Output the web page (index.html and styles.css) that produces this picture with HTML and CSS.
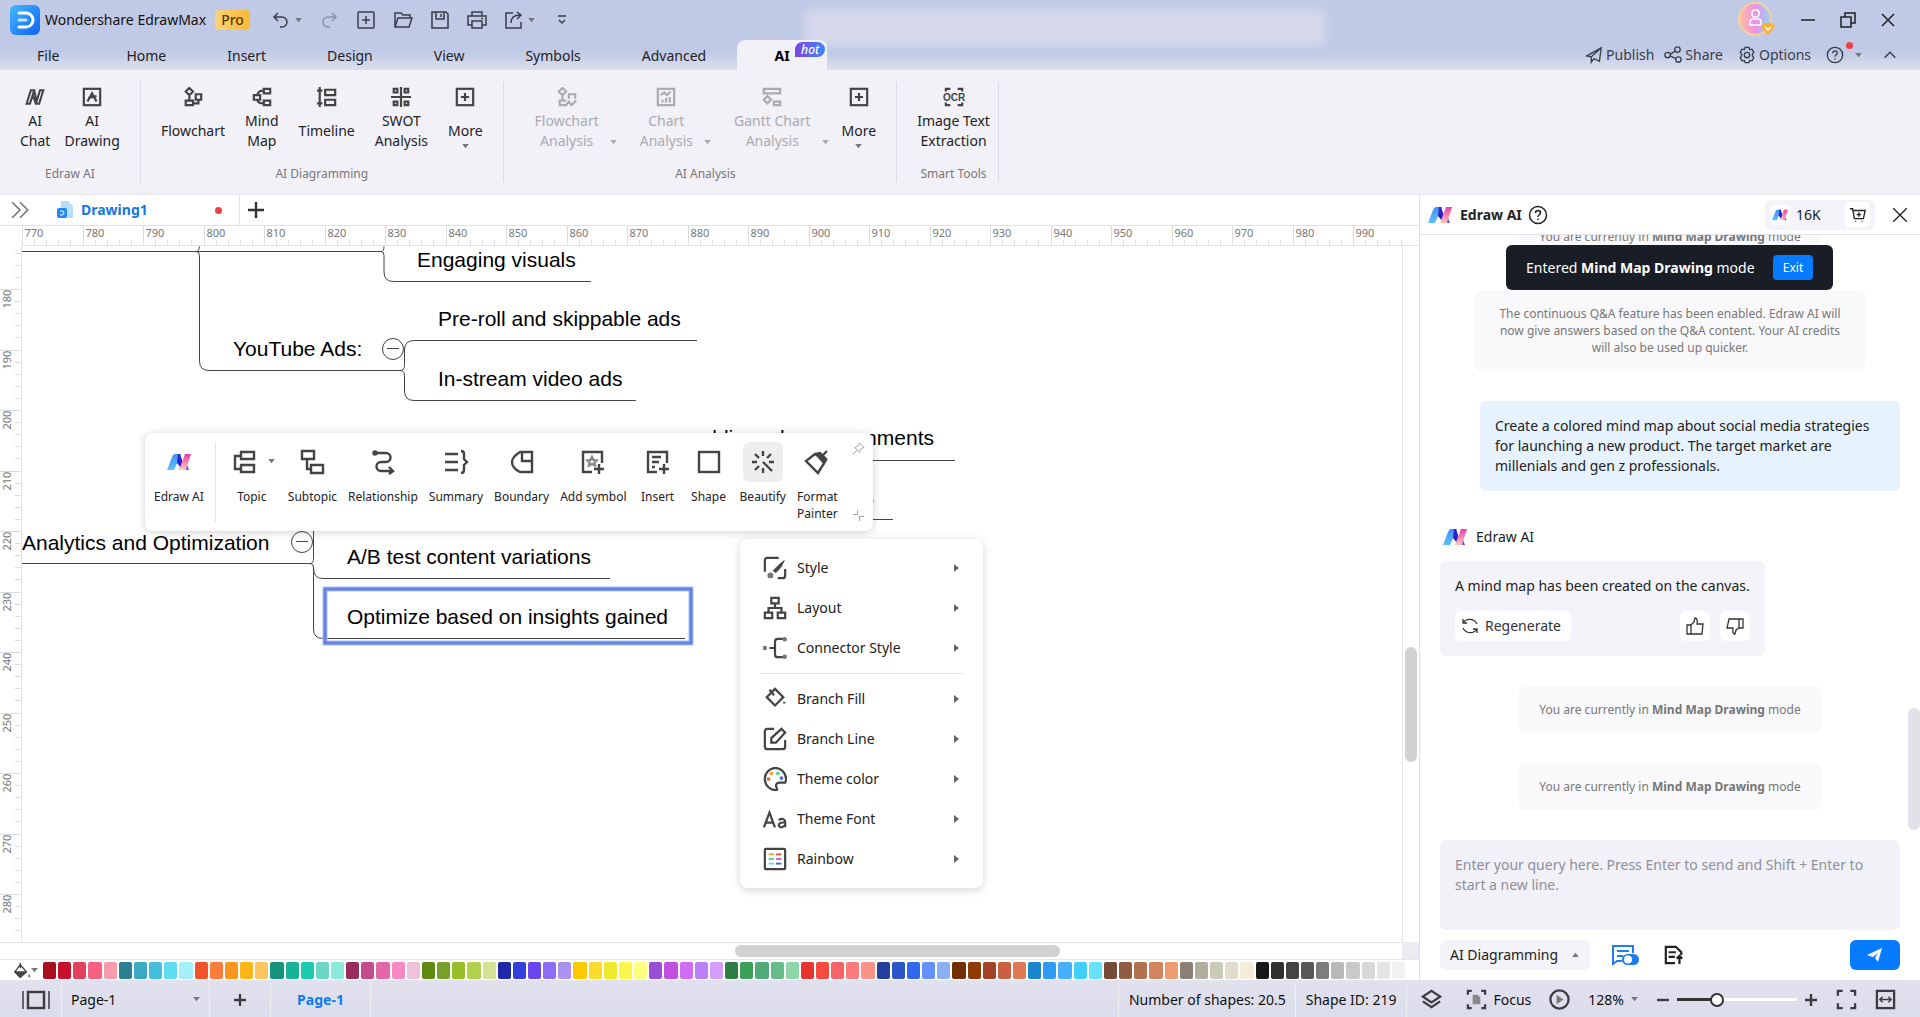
FILE: index.html
```
<!DOCTYPE html>
<html lang="en">
<head>
<meta charset="UTF-8">
<meta name="viewport" content="width=device-width, initial-scale=1.0">
<title>Wondershare EdrawMax</title>
<link rel="stylesheet" href="styles.css">
</head>
<body>

<!-- shared icons -->
<svg class="defs" aria-hidden="true">
  <defs>
    <linearGradient id="g-blue" x1="0" y1="0" x2="0" y2="1"><stop offset="0" stop-color="#3f8ef5"/><stop offset="1" stop-color="#62c0fb"/></linearGradient>
    <linearGradient id="g-pink" x1="0" y1="0" x2="0" y2="1"><stop offset="0" stop-color="#e83fae"/><stop offset="1" stop-color="#fbc9b4"/></linearGradient>
    <linearGradient id="g-logo" x1="0" y1="0" x2="1" y2="1"><stop offset="0" stop-color="#45b8ff"/><stop offset="1" stop-color="#0c63f4"/></linearGradient>
    <linearGradient id="g-user" x1="0" y1="0" x2="1" y2="0"><stop offset="0" stop-color="#ffc39a"/><stop offset="0.5" stop-color="#f08fe6"/><stop offset="1" stop-color="#8fd8f5"/></linearGradient>
    <symbol id="i-edraw" viewBox="0 0 24 18">
      <path d="M8 1h6L7 17H0L5 4Q6 1 8 1z" fill="url(#g-blue)"/>
      <path d="M11 1h2l3 9-2 5-4-5z" fill="#2b22c9"/>
      <path d="M18 1h6l-5 16h-7z" fill="url(#g-pink)"/>
      <path d="M20 12l2 5h-3z" fill="#6a55d8"/>
    </symbol>
    <symbol id="i-caret" viewBox="0 0 8 6"><path d="M0 0h8L4 5z" fill="currentColor"/></symbol>
    <symbol id="i-help" viewBox="0 0 20 20"><circle cx="10" cy="10" r="8.500"/><path d="M7.500 8c0-3.400 5-3.400 5 0 0 1.800-2.500 1.800-2.500 4M10 13.500v1.500"/></symbol>
    <symbol id="i-more" viewBox="0 0 22 22"><rect x="2" y="2" width="18" height="18"/><path d="M11 6.500v9M6.500 11h9"/></symbol>
    <symbol id="i-close" viewBox="0 0 16 16"><path d="M2 2l12 12M14 2L2 14"/></symbol>
  </defs>
</svg>

<header class="titlebar">
  <div class="title-row">
    <svg class="app-logo" viewBox="0 0 30 30"><rect width="30" height="30" rx="6" fill="url(#g-logo)"/><path d="M9 8h7a7 7 0 0 1 0 14H9" fill="none" stroke="#fff" stroke-width="3" stroke-linecap="round"/><path d="M9 15h7" stroke="#c4e4ff" stroke-width="3" stroke-linecap="round"/></svg>
    <span class="app-name">Wondershare EdrawMax</span>
    <span class="pro">Pro</span>
    <div class="quick">
      <button aria-label="Undo"><svg class="ic" viewBox="0 0 20 20"><path d="M7 3L3 7l4 4M3 7h8a5 5 0 0 1 0 10H9"/></svg><svg class="caret"><use href="#i-caret"/></svg></button>
      <button class="faded" aria-label="Redo"><svg class="ic" viewBox="0 0 20 20"><path d="M13 3l4 4-4 4M17 7H9a5 5 0 0 0 0 10h2"/></svg></button>
      <button aria-label="New"><svg class="ic" viewBox="0 0 20 20"><rect x="2" y="2" width="16" height="16" rx="1"/><path d="M10 6v8M6 10h8"/></svg></button>
      <button aria-label="Open"><svg class="ic" viewBox="0 0 20 20"><path d="M2 17V3h6l2 2h7v3M2 17L5 8h14l-3 9z"/></svg></button>
      <button aria-label="Save"><svg class="ic" viewBox="0 0 20 20"><path d="M2 2h14l2 2v14H2zM6 2v7h8V2M11 4v3"/></svg></button>
      <button aria-label="Print"><svg class="ic" viewBox="0 0 20 20"><path d="M5 6V2h10v4M5 15H1V6h18v9h-4M5 11h10v7H5zM14 8.500h2"/></svg></button>
      <button aria-label="Export"><svg class="ic" viewBox="0 0 20 20"><path d="M9 3H2v15h15v-6M7 13c0-5 3-8 9-8M13 2l4 3-4 4"/></svg><svg class="caret"><use href="#i-caret"/></svg></button>
      <button aria-label="Customize"><svg class="ic" viewBox="0 0 20 20"><path d="M6 6h8M7 10l3 3 3-3"/></svg></button>
    </div>
    <div class="window-buttons">
      <svg class="avatar" viewBox="0 0 38 36"><circle cx="17" cy="17" r="16" fill="url(#g-user)" stroke="#f5d29a" stroke-width="2"/><g fill="none" stroke="#fff" stroke-width="1.500"><rect x="14" y="8" width="7" height="7" rx="3"/><path d="M12 23v-3q0-3 3-3h5q3 0 3 3v3z"/></g><path d="M26 21h8l3 4-7 8-7-8z" fill="#f9b233"/><path d="M27 25l3 3 3-3" fill="none" stroke="#fff" stroke-width="1.500"/></svg>
      <button aria-label="Minimize"><svg class="ic dark" viewBox="0 0 16 16"><path d="M1 8h14"/></svg></button>
      <button aria-label="Restore"><svg class="ic dark" viewBox="0 0 16 16"><path d="M1 5h10v10H1zM5 5V1h10v10h-4"/></svg></button>
      <button aria-label="Close"><svg class="ic dark"><use href="#i-close"/></svg></button>
    </div>
  </div>
  <div class="menu-row">
    <nav class="menu">
      <button>File</button>
      <button>Home</button>
      <button>Insert</button>
      <button>Design</button>
      <button>View</button>
      <button>Symbols</button>
      <button>Advanced</button>
      <button class="active">AI<span class="hot">hot</span></button>
    </nav>
    <div class="menu-right">
      <button><svg class="ic" viewBox="0 0 20 20"><path d="M2 11L18 2l-2 15-6-3-3 4v-6zM7 12l11-10"/></svg>Publish</button>
      <button><svg class="ic" viewBox="0 0 20 20"><circle cx="4" cy="10" r="3"/><circle cx="15" cy="4" r="3"/><circle cx="16" cy="15" r="3"/><path d="M7 9l5-3M7 11l6 3"/></svg>Share</button>
      <button class="options"><svg class="ic" viewBox="0 0 20 20"><path d="M8 1.500h4l1 2.500 2.500-.5 2 3.500L16 9.200v1.600l1.500 2.200-2 3.500L13 16l-1 2.500H8L7 16l-2.500.5-2-3.500L4 10.800V9.200L2.500 7l2-3.500L7 4z"/><circle cx="10" cy="10" r="3"/></svg>Options</button>
      <button class="help" aria-label="Help"><svg class="ic"><use href="#i-help"/></svg><svg class="caret"><use href="#i-caret"/></svg><i class="dot"></i></button>
      <button aria-label="Collapse ribbon"><svg class="ic" viewBox="0 0 20 20"><path d="M4 13l6-6 6 6"/></svg></button>
    </div>
  </div>
</header>

<section class="ribbon">
  <div class="group first">
    <div class="tools">
      <button class="tool"><svg class="ic bold" viewBox="0 0 24 20"><path d="M2 18L7 2h4L6 18zM11 2l3 13 4-13h4l-5 16h-4L9.500 8"/></svg><span>AI<br>Chat</span></button>
      <button class="tool"><svg class="ic bold" viewBox="0 0 22 22"><rect x="2" y="2" width="18" height="18"/><path d="M6 16l5-9 5 9M7 12l9-2"/></svg><span>AI<br>Drawing</span></button>
    </div>
    <p>Edraw AI</p>
  </div>
  <div class="group">
    <div class="tools">
      <button class="tool"><svg class="ic bold" viewBox="0 0 22 22"><path d="M7 1l4 4-4 4-4-4zM7 9v6M3 15h8v5H3zM14 8h6v6h-6zM11 18h6v-4"/></svg><span>Flowchart</span></button>
      <button class="tool"><svg class="ic bold" viewBox="0 0 22 22"><path d="M13 2h7v5h-7zM13 15h7v5h-7zM2 9h7v5H2zM6 9q0-5 7-5M6 14q0 4 7 4"/></svg><span>Mind<br>Map</span></button>
      <button class="tool"><svg class="ic bold" viewBox="0 0 22 22"><path d="M3 0v22M0 4h6M0 18h6M9 3h11v6H9zM9 14h11v6H9z"/></svg><span>Timeline</span></button>
      <button class="tool"><svg class="ic bold" viewBox="0 0 22 22"><path d="M11 0v22M0 11h22M3 2h4v4H3zM15 2h4v4h-4zM3 16h4v4H3zM15 16h4v4h-4z"/></svg><span>SWOT<br>Analysis</span></button>
      <button class="tool"><svg class="ic bold"><use href="#i-more"/></svg><span>More</span><svg class="caret under"><use href="#i-caret"/></svg></button>
    </div>
    <p>AI Diagramming</p>
  </div>
  <div class="group analysis">
    <div class="tools">
      <button class="tool" disabled><svg class="ic bold" viewBox="0 0 22 22"><path d="M6 1l4 4-4 4-4-4zM6 9v6M11 20H3v-5h7M13 13V8h7v5M10 20l3-4 3 4 5-5"/></svg><span>Flowchart<br>Analysis</span><svg class="caret side"><use href="#i-caret"/></svg></button>
      <button class="tool" disabled><svg class="ic bold" viewBox="0 0 22 22"><rect x="2" y="2" width="18" height="18"/><path d="M5 9l4-3 3 3 4-4M7 17v-3M11 17v-5M15 17v-6"/></svg><span>Chart<br>Analysis</span><svg class="caret side"><use href="#i-caret"/></svg></button>
      <button class="tool" disabled><svg class="ic bold" viewBox="0 0 22 22"><path d="M2 7V2h18v5zM6 10l4 4-4 4-4-4zM13 16h7v4h-7z"/></svg><span>Gantt Chart<br>Analysis</span><svg class="caret side"><use href="#i-caret"/></svg></button>
      <button class="tool"><svg class="ic bold"><use href="#i-more"/></svg><span>More</span><svg class="caret under"><use href="#i-caret"/></svg></button>
    </div>
    <p>AI Analysis</p>
  </div>
  <div class="group smart">
    <div class="tools">
      <button class="tool"><svg class="ic bold" viewBox="0 0 22 22"><path d="M2 5V2h5M15 2h5v3M2 17v3h5M15 20h5v-3"/><text x="11" y="15" text-anchor="middle" class="ocr">OCR</text></svg><span>Image Text<br>Extraction</span></button>
    </div>
    <p>Smart Tools</p>
  </div>
</section>

<main class="workspace">
  <section class="editor">
    <div class="doc-tabs">
      <button class="expand" aria-label="Expand"><svg class="ic" viewBox="0 0 18 18"><path d="M2 2l7 7-7 7M9 2l7 7-7 7"/></svg></button>
      <div class="doc-tab">
        <svg class="doc-icon" viewBox="0 0 16 18"><path d="M4 0h7l5 5v12H4z" fill="#b9dcfb"/><rect y="7" width="10" height="10" rx="2" fill="#2388f2"/><path d="M3 10h2a2 2 0 0 1 0 4H3" fill="none" stroke="#fff"/></svg>
        <span>Drawing1</span>
        <i class="dot"></i>
      </div>
      <button class="add-tab" aria-label="New tab"><svg class="ic thick" viewBox="0 0 20 20"><path d="M10 2v16M2 10h16"/></svg></button>
    </div>
    <div class="board">
      <div class="ruler-corner"></div>
      <svg class="ruler-top" id="ruler-top"></svg>
      <svg class="ruler-left" id="ruler-left"></svg>
      <div class="canvas">
        <svg class="mindmap">
          <g transform="translate(-22 -246)">
            <g class="links">
              <path d="M0 251.500H381q3 0 3 -5M196 251.500q3 0 3.500 -5M196 251.500q3.500 0 3.500 4V361q0 9.500 9.500 9.500H400"/>
              <path d="M381 251.500q3 0 3 4V272q0 9.500 9.500 9.500H591"/>
              <path d="M400 370.500q4.500 0 4.500 -5V350q0 -9.500 9.500 -9.500H697"/>
              <path d="M400 370.500q4.500 0 4.500 5V391q0 9.500 9.500 9.500H636"/>
              <path d="M690 460.500H955M690 519.500H893"/>
              <path d="M0 563.500H310q3.500 0 3.500 -5V500"/>
              <path d="M310 563.500q3.500 0 3.500 4 0 11 9 11H610M313.500 566V629q0 9.500 9.500 9.500H685"/>
            </g>
            <g class="folds">
              <circle cx="393" cy="349" r="10.500"/><path d="M387 348.500h12"/>
              <circle cx="302" cy="542" r="10.500"/><path d="M296 541.500h12"/>
            </g>
            <rect x="325" y="589" width="366" height="54" class="selection-glow"/>
            <rect x="325" y="589" width="366" height="54" class="selection"/>
            <g class="topics">
              <text x="417" y="267">Engaging visuals</text>
              <text x="233" y="356">YouTube Ads:</text>
              <text x="438" y="326">Pre-roll and skippable ads</text>
              <text x="438" y="386">In-stream video ads</text>
              <text x="934" y="445" text-anchor="end">public and user comments</text>
              <text x="874" y="504" text-anchor="end">shares</text>
              <text x="22" y="550">Analytics and Optimization</text>
              <text x="347" y="564">A/B test content variations</text>
              <text x="347" y="624">Optimize based on insights gained</text>
            </g>
          </g>
        </svg>

        <div class="float-bar">
          <button class="fb-ai"><svg class="ai-logo"><use href="#i-edraw"/></svg>Edraw AI</button>
          <button class="fb-topic"><svg class="ic" viewBox="0 0 26 26"><path d="M9 3h13v7H9zM9 16h13v7H9zM9 7H3v13h6"/></svg>Topic<svg class="caret"><use href="#i-caret"/></svg></button>
          <button><svg class="ic" viewBox="0 0 26 26"><path d="M3 2h12v8H3zM12 16h12v8H12zM8 10v10h4"/></svg>Subtopic</button>
          <button><svg class="ic" viewBox="0 0 26 26"><circle cx="5" cy="4" r="1.500"/><path d="M6 4h10a4.500 4.500 0 0 1 0 9h-5a4.500 4.500 0 0 0 0 9h12M19 18l4 4-4 3"/></svg>Relationship</button>
          <button><svg class="ic" viewBox="0 0 26 26"><path d="M2 5h13M2 13h13M2 21h13M18 2q3 0 3 3v5l3 3-3 3v5q0 3-3 3"/></svg>Summary</button>
          <button><svg class="ic" viewBox="0 0 26 26"><path d="M11 3h12v20H11q-8-4-8-10 0-5 8-10zM13 3v9h10"/></svg>Boundary</button>
          <button><svg class="ic" viewBox="0 0 26 26"><path d="M12 23H3V3h19v11M19 15v10M14 20h10"/><path d="M12 8l1.500 3 3 .5-2 2 .5 3-3-1.500-3 1.500.5-3-2-2 3-.5z" stroke="#888"/></svg>Add symbol</button>
          <button><svg class="ic" viewBox="0 0 26 26"><path d="M12 23H3V3h19v11M19 15v10M14 20h10M7 8h9M7 13h7M7 18h3"/></svg>Insert</button>
          <button><svg class="ic" viewBox="0 0 26 26"><rect x="3" y="3" width="20" height="20"/></svg>Shape</button>
          <button class="on"><svg class="ic" viewBox="0 0 26 26"><path d="M13 2v5M13 19v5M2 13h5M19 13h5M5 5l4 4M21 5l-4 4M5 21l4-4M13 13l9 9"/></svg>Beautify</button>
          <button><svg class="ic" viewBox="0 0 26 26"><path d="M11 5L2 12l12 12 8-13z"/><path d="M12 5l4-1 6 6-2 4zM18 7l5-5" fill="currentColor"/></svg>Format<br>Painter</button>
          <div class="fb-end">
            <svg viewBox="0 0 14 14"><path d="M8 1l5 5-3 1-2 4-5-5 4-2zM5 9l-4 4"/></svg>
            <svg viewBox="0 0 14 14"><path d="M6 1v5H1M8 13V8h5"/></svg>
          </div>
        </div>

        <div class="beautify-menu">
          <button><svg class="ic" viewBox="0 0 26 26"><path d="M2 17V5q0-3 3-3h12M24 14v7q0 3-3 3h-5"/><path d="M23 5q-3 8-9 13l-3-2Q16 10 23 5z" fill="currentColor" stroke-width="1"/><circle cx="8" cy="21" r="2" fill="#777" stroke="#777"/></svg>Style</button>
          <button><svg class="ic" viewBox="0 0 26 26"><path d="M9 2h8v6H9zM2 18h8v6H2zM16 18h8v6h-8zM13 8v5M6 18v-5h14v5"/></svg>Layout</button>
          <button><svg class="ic" viewBox="0 0 26 26"><path d="M7 13h6M22 3h-6q-3 0-3 3v14q0 3 3 3h6"/><g fill="#777" stroke="none"><circle cx="2" cy="13" r="2.500"/><circle cx="23.500" cy="3.500" r="2.500"/><circle cx="23.500" cy="22.500" r="2.500"/></g></svg>Connector Style</button>
          <hr>
          <button><svg class="ic" viewBox="0 0 26 26"><path d="M13 2l9 9-9 9-9-9zM7 3l5 6M23 16v2"/></svg>Branch Fill</button>
          <button><svg class="ic" viewBox="0 0 26 26"><path d="M12 2H5Q2 2 2 5v16q0 3 3 3h16q3 0 3-3v-7M9 17v-5L20 2l4 4-10 11z"/></svg>Branch Line</button>
          <button><svg class="ic" viewBox="0 0 26 26"><path d="M13 1a12 12 0 1 0 2 24q1-1-1-4 0-4 4-4h6q1-2 1-4A12 12 0 0 0 13 1z"/><g stroke="none"><circle cx="6" cy="13" r="2" fill="#e0603f"/><circle cx="9" cy="7" r="2" fill="#f0a63c"/><circle cx="16" cy="7" r="2" fill="#63cf9b"/><circle cx="20" cy="12" r="2" fill="#3b6fd6"/></g></svg>Theme color</button>
          <button><svg class="ic" viewBox="0 0 26 26"><path d="M1 22L7 6l6 16M3 17h8M17 14q6-3 7 2v6M24 17q-7-1-7 3 2 4 7 0"/></svg>Theme Font</button>
          <button><svg class="ic" viewBox="0 0 26 26"><rect x="2" y="2" width="22" height="22" rx="1"/><g stroke-width="2"><path stroke="#e9a53b" d="M6 8h6"/><path stroke="#d9603f" d="M14 8h6"/><path stroke="#5cc98c" d="M6 13h6"/><path stroke="#c95cd0" d="M14 13h6"/><path stroke="#7fcdf0" d="M6 18h6"/><path stroke="#4668d8" d="M14 18h6"/></g></svg>Rainbow</button>
        </div>
      </div>
      <div class="scroll-v"><div class="thumb"></div></div>
      <div class="scroll-h"><div class="thumb"></div></div>
      <div class="scroll-corner"></div>
    </div>
    <div class="palette">
      <button aria-label="Fill color"><svg class="ic" viewBox="0 0 20 20"><path d="M8 3l7 8-7 6-6-6zM8 1v6"/><path d="M3 11h11l-6 6z" fill="currentColor"/><path d="M18 14v3"/></svg><svg class="caret"><use href="#i-caret"/></svg></button>
      <div class="swatches" id="swatches"></div>
    </div>
  </section>

  <aside class="ai-panel">
    <div class="panel-head">
      <svg class="ai-logo"><use href="#i-edraw"/></svg>
      <b>Edraw AI</b>
      <svg class="ic"><use href="#i-help"/></svg>
      <div class="credits">
        <span class="chip"><svg><use href="#i-edraw"/></svg></span>
        <span class="amount">16K</span>
        <button aria-label="Buy credits"><svg class="ic" viewBox="0 0 20 20"><path d="M1 3h3l2 11h10l2-9H5M11 7v5M8.500 9.500h5M7 17h1M14 17h1"/></svg></button>
      </div>
      <button class="close" aria-label="Close panel"><svg class="ic"><use href="#i-close"/></svg></button>
    </div>
    <div class="chat">
      <p class="notice">You are currently in <b>Mind Map Drawing</b> mode</p>
      <p class="notice wide">The continuous Q&amp;A feature has been enabled. Edraw AI will now give answers based on the Q&amp;A content. Your AI credits will also be used up quicker.</p>
      <p class="query">Create a colored mind map about social media strategies for launching a new product. The target market are millenials and gen z professionals.</p>
      <div class="reply">
        <div class="author"><svg class="ai-logo"><use href="#i-edraw"/></svg>Edraw AI</div>
        <div class="answer">
          <p>A mind map has been created on the canvas.</p>
          <div class="actions">
            <button><svg class="ic" viewBox="0 0 18 18"><path d="M2 6a8 8 0 0 1 14 1M16 12a8 8 0 0 1-14-1M2 2v4h4M16 16v-4h-4"/></svg>Regenerate</button>
            <button class="vote" aria-label="Good"><svg class="ic" viewBox="0 0 18 18"><path d="M1 8h4v9H1zM5 8l3-3 1-4q3 0 2 6h6l-1 10H5"/></svg></button>
            <button class="vote" aria-label="Bad"><svg class="ic" viewBox="0 0 18 18"><path d="M13 2h4v9h-4zM13 11l-3 2-1 4q-3 0-2-6H1L3 2h10"/></svg></button>
          </div>
        </div>
      </div>
      <p class="notice">You are currently in <b>Mind Map Drawing</b> mode</p>
      <p class="notice">You are currently in <b>Mind Map Drawing</b> mode</p>
      <div class="toast"><span>Entered <b>Mind Map Drawing</b> mode</span><button>Exit</button></div>
      <div class="thumb"></div>
    </div>
    <div class="composer">
      <textarea aria-label="Query" placeholder="Enter your query here. Press Enter to send and Shift + Enter to start a new line."></textarea>
      <div class="composer-bar">
        <div class="mode"><select aria-label="Mode"><option>AI Diagramming</option></select><svg class="caret up"><use href="#i-caret"/></svg></div>
        <button class="context" aria-label="Continuous chat"><svg viewBox="0 0 28 22"><g fill="none" stroke="#1d7df2" stroke-width="2"><path d="M11 17H6l-4 3V2h20v7M6 7h12M6 12h6"/></g><rect x="11" y="10" width="17" height="11" rx="5.500" fill="#1d7df2"/><circle cx="17" cy="15.500" r="4" fill="#fff"/></svg></button>
        <button aria-label="Upload file"><svg class="ic thick" viewBox="0 0 22 22"><path d="M12 20H2V2h11l6 6v3M5 8h8M5 13h7M17 21v-8M14 15l3-3 3 3"/></svg></button>
        <button class="send" aria-label="Send"><svg viewBox="0 0 16 16"><path d="M0 8L15 1l-4 14-3-4 3-5-5 4z" fill="#fff"/></svg></button>
      </div>
    </div>
  </aside>
</main>

<footer class="status">
  <button class="panes" aria-label="Page view"><svg class="ic thick" viewBox="0 0 28 20"><rect x="6" y="2" width="16" height="16"/><path d="M1 1v18M27 1v18" stroke-width="1.500"/></svg></button>
  <div class="page-select"><select aria-label="Page"><option>Page-1</option></select><svg class="caret"><use href="#i-caret"/></svg></div>
  <button class="add-page" aria-label="Add page"><svg class="ic thick" viewBox="0 0 14 14"><path d="M7 1v12M1 7h12"/></svg></button>
  <button class="page-tab">Page-1</button>
  <span class="info push">Number of shapes: 20.5</span>
  <span class="info">Shape ID: 219</span>
  <div class="view-tools">
    <button class="layers" aria-label="Layers"><svg class="ic thick" viewBox="0 0 22 22"><path d="M11 2l9 6-9 6-9-6zM2 13l9 6 9-6"/></svg></button>
    <button class="focus"><svg class="ic thick" viewBox="0 0 22 22"><path d="M2 6V2h4M16 2h4v4M2 16v4h4M16 20h4v-4"/><path d="M7 6h5l3 3v7H7z" fill="#888" stroke="none"/></svg>Focus</button>
    <button aria-label="Present"><svg class="ic thick" viewBox="0 0 22 22"><circle cx="11" cy="11" r="9.500"/><path d="M8 6l7 5-7 5z" fill="#777" stroke="none"/></svg></button>
    <button class="percent">128%<svg class="caret"><use href="#i-caret"/></svg></button>
    <div class="zoom">
      <button aria-label="Zoom out"><svg class="ic thick" viewBox="0 0 14 14"><path d="M1 7h12"/></svg></button>
      <input type="range" min="0" max="100" value="31" aria-label="Zoom">
      <button aria-label="Zoom in"><svg class="ic thick" viewBox="0 0 14 14"><path d="M7 1v12M1 7h12"/></svg></button>
    </div>
    <button aria-label="Full screen"><svg class="ic thick" viewBox="0 0 22 22"><path d="M2 7V2h5M15 2h5v5M2 15v5h5M15 20h5v-5"/></svg></button>
    <button aria-label="Fit width"><svg class="ic thick" viewBox="0 0 22 22"><rect x="2" y="2" width="18" height="18"/><path d="M6 11h10M8 8l-3 3 3 3M14 8l3 3-3 3" stroke-width="1.500"/></svg></button>
  </div>
</footer>

<script>
var NS = "http://www.w3.org/2000/svg";
var UNIT = 6.05; // pixels per ruler unit at 128% zoom

function add(parent, name, attrs, text) {
  var el = document.createElementNS(NS, name);
  for (var key in attrs) el.setAttribute(key, attrs[key]);
  if (text) el.textContent = text;
  parent.appendChild(el);
}

// horizontal ruler
var rulerTop = document.getElementById("ruler-top");
for (var v = 770; v < 1000; v += 2) {
  var x = Math.round((v - 770) * UNIT) + 0.5;
  var major = v % 10 === 0;
  add(rulerTop, "path", { d: "M" + x + " " + (major ? 0 : 14) + "V21" });
  if (major) add(rulerTop, "text", { x: x + 2, y: 11 }, String(v));
}

// vertical ruler
var rulerLeft = document.getElementById("ruler-left");
for (v = 174; v < 288; v += 2) {
  var y = Math.round((v - 180) * UNIT + 43) + 0.5;
  major = v % 10 === 0;
  add(rulerLeft, "path", { d: "M" + (major ? 0 : 15) + " " + y + "H22" });
  if (major) add(rulerLeft, "text", { transform: "translate(11 " + (y + 19) + ") rotate(-90)" }, String(v));
}

// colour palette
var colors = ("a9101f c8102e e4415f f6617f f79cae 2a7f90 3ba9bf 43bfdc 5edbef a5effb " +
  "f0522a ff7d3b fa961e ffb515 fdc55f 16937c 17b399 1bcbb0 6bd7c5 88ead8 " +
  "9a2b5e c44c8c e467a9 f788c4 efc1db 5f8a12 76a02a 98c026 b2d04b d3e295 " +
  "1e28a8 3340dc 6a45f0 8c6df7 aa92f3 fbc900 fbdc2c eeea2b fbf64c fdff80 " +
  "984fd6 c04fe2 d06cf7 bb80fa d69efb 2e7d45 3b9f55 50ab76 66bb88 8ed6aa " +
  "e5352c f84a3e f86367 ff7b7b fb9389 253f9f 2c55cc 3368ee 6490fd 8aaff4 " +
  "732f04 913b03 a54127 cc5e41 e07856 1a86cf 2d9af3 45b0fe 41cffd 69e2fe " +
  "774b36 905c42 b27150 d2845f f09b6f 8a8074 b0ae9c cccab9 e2dccd f2ecd9 " +
  "181818 2f2f2f 444444 585858 7d7d7d bababa c9c9c9 d8d8d8 e5e5e5 f2f2f2").split(" ");
var swatches = document.getElementById("swatches");
colors.forEach(function(color) {
  var el = document.createElement("i");
  el.style.background = "#" + color;
  swatches.appendChild(el);
});
</script>

</body>
</html>
```

FILE: styles.css
```
* {
  box-sizing: border-box;
}

body {
  margin: 0;
  height: 100vh;
  display: flex;
  flex-direction: column;
  overflow: hidden;
  font-family: "Noto Sans", "Open Sans", sans-serif;
  font-size: 14px;
  line-height: 20px;
  color: #222;
  background: #fff;
}

button, select, textarea {
  font: inherit;
  color: inherit;
  border: none;
  background: none;
  padding: 0;
  margin: 0;
}

button {
  display: flex;
  align-items: center;
  justify-content: center;
  white-space: nowrap;
}

select {
  appearance: none;
  width: 100%;
  height: 100%;
}

p {
  margin: 0;
}

.defs {
  position: absolute;
  width: 0;
  height: 0;
}

.ic {
  width: 20px;
  height: 20px;
  flex: none;
  fill: none;
  stroke: currentColor;
  stroke-width: 1.5;
}

.ic.bold, .ic.thick {
  stroke-width: 2.4;
}

.caret {
  width: 7px;
  height: 5px;
  flex: none;
  color: #777;
}

.dot {
  width: 7px;
  height: 7px;
  border-radius: 50%;
  background: #ea4141;
}

.ai-logo {
  width: 24px;
  height: 18px;
  flex: none;
}

/* title bar */
.titlebar {
  position: relative;
  z-index: 0;
  height: 70px;
  flex: none;
  overflow: hidden;
  color: #3a3d4a;
  background: linear-gradient(to bottom, #c0cae6 52px, #dcdeed 70px);
}

/* soft light patch behind the bar */
.titlebar::before {
  content: "";
  position: absolute;
  z-index: -1;
  left: 42%;
  right: 31%;
  top: 10px;
  height: 36px;
  background: #d6d9ec;
  filter: blur(5px);
}

.title-row {
  height: 40px;
  display: flex;
  align-items: center;
  padding: 0 24px 0 10px;
}

.app-logo {
  width: 30px;
  height: 30px;
  margin-right: 5px;
}

.app-name {
  color: #111;
}

.pro {
  margin-left: 9px;
  padding: 0 6px;
  border-radius: 4px;
  font-weight: 500;
  color: #5a3600;
  background: linear-gradient(to right, #fbd377, #fbb934);
}

.quick {
  display: flex;
  gap: 17px;
  margin-left: 21px;
}

.quick .caret {
  margin-left: 4px;
}

.faded {
  opacity: 0.4;
}

.window-buttons {
  display: flex;
  align-items: center;
  gap: 24px;
  margin-left: auto;
}

.avatar {
  width: 38px;
  height: 36px;
}

.window-buttons .ic {
  width: 16px;
  height: 16px;
}

.ic.dark {
  color: #222;
}

.menu-row {
  height: 30px;
  display: flex;
  justify-content: space-between;
}

.menu {
  display: flex;
  gap: 1px;
  padding-left: 7px;
}

.menu button {
  padding: 2px 30px 0;
  color: #222;
}

.menu button:first-child {
  padding-right: 36px;
}

.menu .active {
  position: relative;
  width: 90px;
  font-weight: bold;
  color: #000;
  border-radius: 8px 8px 0 0;
  background: #f2f1f8;
}

.hot {
  position: absolute;
  top: 2px;
  right: 2px;
  width: 30px;
  height: 15px;
  border-radius: 8px 8px 8px 0;
  font-size: 12px;
  font-style: italic;
  font-weight: 500;
  line-height: 15px;
  color: #fff;
  background: linear-gradient(to right, #7a46e6, #3f86f7);
}

.menu-right {
  display: flex;
  gap: 10px;
  padding-right: 18px;
}

.menu-right .ic {
  margin-right: 3px;
  width: 18px;
  height: 18px;
}

.menu-right .options {
  margin-left: 5px;
}

.menu-right .help {
  position: relative;
  margin: 0 9px 0 5px;
}

.menu-right .help .caret {
  margin-left: 8px;
}

.help .dot {
  position: absolute;
  top: 2px;
  left: 20px;
}

/* ribbon */
.ribbon {
  height: 125px;
  flex: none;
  display: flex;
  padding: 12px 0;
  background: #f2f1f8;
  border-bottom: 1px solid #e3e3ea;
}

.group {
  display: flex;
  flex-direction: column;
  justify-content: space-between;
  padding: 5px 20px 0;
  border-right: 1px solid #dddde5;
}

.group p {
  font-size: 12px;
  line-height: 16px;
  text-align: center;
  color: #777;
}

.tools {
  display: flex;
  gap: 20px;
}

.first .tools {
  gap: 14px;
}

.analysis {
  padding-left: 31px;
}

.analysis .tools {
  gap: 41px;
}

.analysis .tool:last-child {
  margin-left: -10px;
}

.smart {
  padding-right: 8px;
}

.tool {
  position: relative;
  flex-direction: column;
  justify-content: flex-start;
}

.tool .ic {
  color: #444;
}

.tool span {
  height: 44px;
  display: flex;
  align-items: center;
  padding-top: 4px;
}

.tool:disabled, .tool:disabled .ic, .tool:disabled .caret {
  color: #aaaab0;
}

.caret.under {
  position: absolute;
  bottom: 2px;
}

.caret.side {
  position: absolute;
  right: -18px;
  bottom: 6px;
}

.tool .ic:has(.ocr) {
  overflow: visible;
}

.ocr {
  font: bold 11px "Liberation Sans", sans-serif;
  fill: #444;
  stroke: none;
}

/* workspace */
.workspace {
  flex: 1;
  min-height: 0;
  display: flex;
}

.editor {
  flex: 1;
  min-width: 0;
  display: flex;
  flex-direction: column;
}

.doc-tabs {
  height: 30px;
  flex: none;
  display: flex;
}

.doc-tabs .expand {
  width: 40px;
  color: #777;
}

.doc-tab {
  width: 200px;
  display: flex;
  align-items: center;
  gap: 8px;
  padding: 0 17px;
  font-weight: bold;
  color: #1478e0;
  border-right: 1px solid #e0e0e4;
}

.doc-icon {
  width: 16px;
  height: 18px;
}

.doc-tab .dot {
  margin-left: auto;
}

.add-tab {
  width: 31px;
  color: #333;
}

.board {
  flex: 1;
  min-height: 0;
  display: grid;
  grid-template: 21px 1fr 17px / 22px 1fr 17px;
}

.ruler-corner, .ruler-top, .scroll-h {
  border-top: 1px solid #e2e2e4;
}

.ruler-top {
  grid-column: 2 / 4;
  width: 100%;
  height: 21px;
  border-bottom: 1px solid #e2e2e4;
}

.ruler-left {
  width: 22px;
  height: 100%;
  border-right: 1px solid #e2e2e4;
}

.ruler-top path, .ruler-left path {
  stroke: #dcdcde;
}

.ruler-top text, .ruler-left text {
  font-size: 11px;
  fill: #777;
}

.canvas {
  position: relative;
  overflow: hidden;
}

.mindmap {
  width: 100%;
  height: 100%;
}

.links, .folds {
  fill: none;
  stroke: #444;
}

.folds {
  fill: #fff;
}

.selection, .selection-glow {
  fill: none;
  stroke: #6783de;
  stroke-width: 3;
}

.selection-glow {
  stroke: #a9bdf5;
  stroke-width: 5;
}

.topics text {
  font-family: "Liberation Sans", Arial, sans-serif;
  font-size: 21px;
  fill: #000;
}

.float-bar {
  position: absolute;
  left: 123px;
  top: 187px;
  display: flex;
  gap: 11px;
  height: 98px;
  padding: 9px 8px 9px 9px;
  border-radius: 8px;
  font-size: 12px;
  line-height: 17px;
  background: #fff;
  box-shadow: 0 1px 8px rgba(0, 0, 0, 0.2);
}

.float-bar button {
  min-width: 40px;
  flex-direction: column;
  justify-content: flex-start;
}

.float-bar .ic {
  width: 40px;
  height: 40px;
  padding: 7px;
  margin-bottom: 6px;
  stroke-width: 2.4;
  border-radius: 6px;
  color: #444;
}

.float-bar .ai-logo {
  margin: 11px 0 17px;
}

.float-bar .on .ic {
  background: #eee;
}

.float-bar .fb-ai {
  padding-right: 11px;
  border-right: 1px solid #e5e5e5;
}

.float-bar .fb-topic {
  position: relative;
  width: 50px;
}

.fb-topic .caret {
  position: absolute;
  top: 17px;
  right: 2px;
}

.fb-topic .ic {
  margin-right: 14px;
}

.fb-end {
  display: flex;
  flex-direction: column;
  justify-content: space-between;
  padding-left: 3px;
}

.fb-end svg {
  width: 13px;
  height: 13px;
  fill: none;
  stroke: #999;
}

.beautify-menu {
  position: absolute;
  left: 718px;
  top: 293px;
  width: 243px;
  padding: 9px 20px;
  border-radius: 8px;
  background: #fff;
  box-shadow: 0 2px 10px rgba(0, 0, 0, 0.17);
}

.beautify-menu button {
  width: 100%;
  height: 40px;
  justify-content: flex-start;
  gap: 10px;
  padding: 0 4px 0 3px;
}

.beautify-menu .ic {
  width: 24px;
  height: 24px;
  stroke-width: 2.4;
  color: #444;
}

.beautify-menu button::after {
  content: "";
  margin-left: auto;
  border: 4px solid transparent;
  border-left: 5px solid #666;
  border-right: 0;
}

.beautify-menu hr {
  margin: 5px 0;
  border: none;
  border-top: 1px solid #e5e5e5;
}

.scroll-v {
  border-left: 1px solid #e6e6e8;
  padding: 401px 2px 0;
}

.scroll-v .thumb {
  height: 115px;
  border-radius: 6px;
  background: #d0d1d3;
}

.scroll-h {
  grid-column: 1 / 3;
  padding: 2px 0 2px 735px;
}

.scroll-h .thumb {
  width: 325px;
  height: 12px;
  border-radius: 6px;
  background: #d0d1d3;
}

.scroll-corner {
  background: #ebebf2;
}

.palette {
  height: 21px;
  flex: none;
  display: flex;
  padding: 2px 14px 1px 13px;
  border-top: 1px solid #e6e6e8;
}

.palette button {
  width: 30px;
  justify-content: flex-start;
}

.palette .ic {
  width: 18px;
  height: 18px;
  color: #444;
}

.swatches {
  flex: 1;
  display: flex;
  gap: 2px;
}

.swatches i {
  flex: 1;
  border-radius: 2px;
}

/* AI panel */
.ai-panel {
  width: 501px;
  flex: none;
  display: flex;
  flex-direction: column;
  border-left: 1px solid #dedee2;
}

.panel-head {
  height: 40px;
  flex: none;
  display: flex;
  align-items: center;
  padding: 0 11px 0 8px;
  border-bottom: 1px solid #e4e4e8;
}

.panel-head b {
  margin: 0 6px 0 8px;
}

.credits {
  display: flex;
  align-items: center;
  width: 110px;
  height: 30px;
  margin: 0 16px 0 auto;
  padding: 0 5px;
  border-radius: 6px;
  background: #f4f3f9;
}

.chip {
  width: 20px;
  height: 20px;
  padding: 3px 2px;
  border-radius: 4px;
  line-height: 0;
  background: #fff;
}

.chip svg {
  width: 16px;
  height: 14px;
}

.amount {
  margin: 0 auto 0 6px;
}

.credits button {
  width: 25px;
  height: 25px;
  border-radius: 4px;
  background: #fff;
}

.credits .ic, .close .ic {
  width: 18px;
  height: 18px;
}

.close .ic {
  stroke-width: 1.2;
}

.chat {
  position: relative;
  flex: 1;
  min-height: 0;
  display: flex;
  flex-direction: column;
  justify-content: flex-end;
  align-items: center;
  gap: 30px;
  padding: 0 20px 30px;
  overflow: hidden;
}

.notice {
  flex: none;
  min-width: 302px;
  padding: 15px;
  border-radius: 6px;
  font-size: 12px;
  line-height: 17px;
  text-align: center;
  color: #777;
  background: #f9f9fb;
}

.notice.wide {
  width: 390px;
}

.query {
  align-self: flex-end;
  width: 420px;
  padding: 15px;
  border-radius: 6px;
  background: #e6f2fe;
}

.reply {
  align-self: flex-start;
}

.author {
  height: 30px;
  display: flex;
  align-items: center;
  gap: 9px;
  padding: 2px 3px 0;
  margin-bottom: 10px;
}

.answer {
  padding: 15px;
  border-radius: 6px;
  background: #f4f3f9;
}

.actions {
  display: flex;
  gap: 10px;
  margin-top: 15px;
}

.actions button {
  height: 30px;
  gap: 6px;
  padding: 0 10px 0 6px;
  border-radius: 6px;
  color: #333;
  background: #fff;
}

.actions .ic {
  width: 18px;
  height: 18px;
  stroke-width: 1.3;
}

.actions .vote {
  width: 30px;
  padding: 0;
}

.actions button:nth-child(2) {
  margin-left: auto;
}

.toast {
  position: absolute;
  top: 10px;
  left: 86px;
  width: 327px;
  height: 45px;
  display: flex;
  align-items: center;
  justify-content: space-between;
  padding: 0 20px;
  border-radius: 6px;
  color: #fff;
  background: #191d26;
}

.toast button {
  width: 40px;
  height: 25px;
  border-radius: 4px;
  font-size: 12px;
  background: #067bff;
}

.chat .thumb {
  position: absolute;
  right: 0;
  bottom: 10px;
  width: 12px;
  height: 122px;
  border-radius: 6px;
  background: #e2e1e9;
}

.composer {
  flex: none;
  padding: 0 20px 10px;
}

textarea {
  display: block;
  width: 100%;
  height: 90px;
  padding: 15px;
  border-radius: 6px;
  resize: none;
  background: #f2f1f8;
}

textarea::placeholder {
  color: #8f8f97;
}

.composer-bar {
  display: flex;
  align-items: center;
  height: 30px;
  margin-top: 10px;
}

.mode {
  position: relative;
  width: 150px;
  height: 30px;
  margin-right: 21px;
  border-radius: 6px;
  background: #f4f3f9;
}

.mode select {
  padding: 0 10px;
}

.mode .caret {
  position: absolute;
  top: 12px;
  right: 11px;
}

.caret.up {
  transform: rotate(180deg);
}

.context {
  margin-right: 25px;
}

.context svg {
  width: 28px;
  height: 22px;
}

.send {
  width: 50px;
  height: 30px;
  margin-left: auto;
  border-radius: 6px;
  background: #067bff;
}

.send svg {
  width: 16px;
  height: 16px;
}

/* status bar */
.status {
  height: 37px;
  flex: none;
  display: flex;
  padding: 2px 24px 0 10px;
  color: #111;
  background: linear-gradient(to bottom, #e2e1ee, #dbdcec);
}

.status .ic {
  color: #3c3c42;
}

.panes {
  width: 52px;
  border-right: 1px solid #eeeef5;
}

.panes .ic {
  width: 28px;
}

.page-select {
  position: relative;
  width: 148px;
  border-right: 1px solid #eeeef5;
}

.page-select select {
  padding: 0 9px;
}

.page-select .caret {
  position: absolute;
  top: 15px;
  right: 9px;
}

.add-page {
  width: 61px;
  border-right: 1px solid #eeeef5;
}

.status .add-page .ic, .zoom .ic {
  width: 14px;
  height: 14px;
}

.page-tab {
  width: 100px;
  font-weight: bold;
  color: #0a7cf5;
  border-right: 1px solid #eeeef5;
}

.info {
  display: flex;
  align-items: center;
  padding: 0 9px 0 10px;
  border-right: 1px solid #eeeef5;
}

.push {
  margin-left: auto;
  border-left: 1px solid #eeeef5;
}

.view-tools {
  display: flex;
  align-items: center;
  gap: 18px;
  padding-left: 14px;
}

.view-tools .ic {
  width: 21px;
  height: 21px;
}

.layers {
  margin-right: 6px;
}

.focus, .percent, .zoom {
  display: flex;
  align-items: center;
  gap: 7px;
}

.view-tools .zoom .ic {
  width: 14px;
  height: 14px;
}

.zoom input {
  appearance: none;
  width: 120px;
  height: 14px;
  margin: 0;
  background: linear-gradient(to right, #333 39px, #fff 39px) center / 100% 3px no-repeat;
}

.zoom input::-webkit-slider-thumb {
  appearance: none;
  width: 14px;
  height: 14px;
  border: 2px solid #333;
  border-radius: 50%;
  background: #fff;
}
```
